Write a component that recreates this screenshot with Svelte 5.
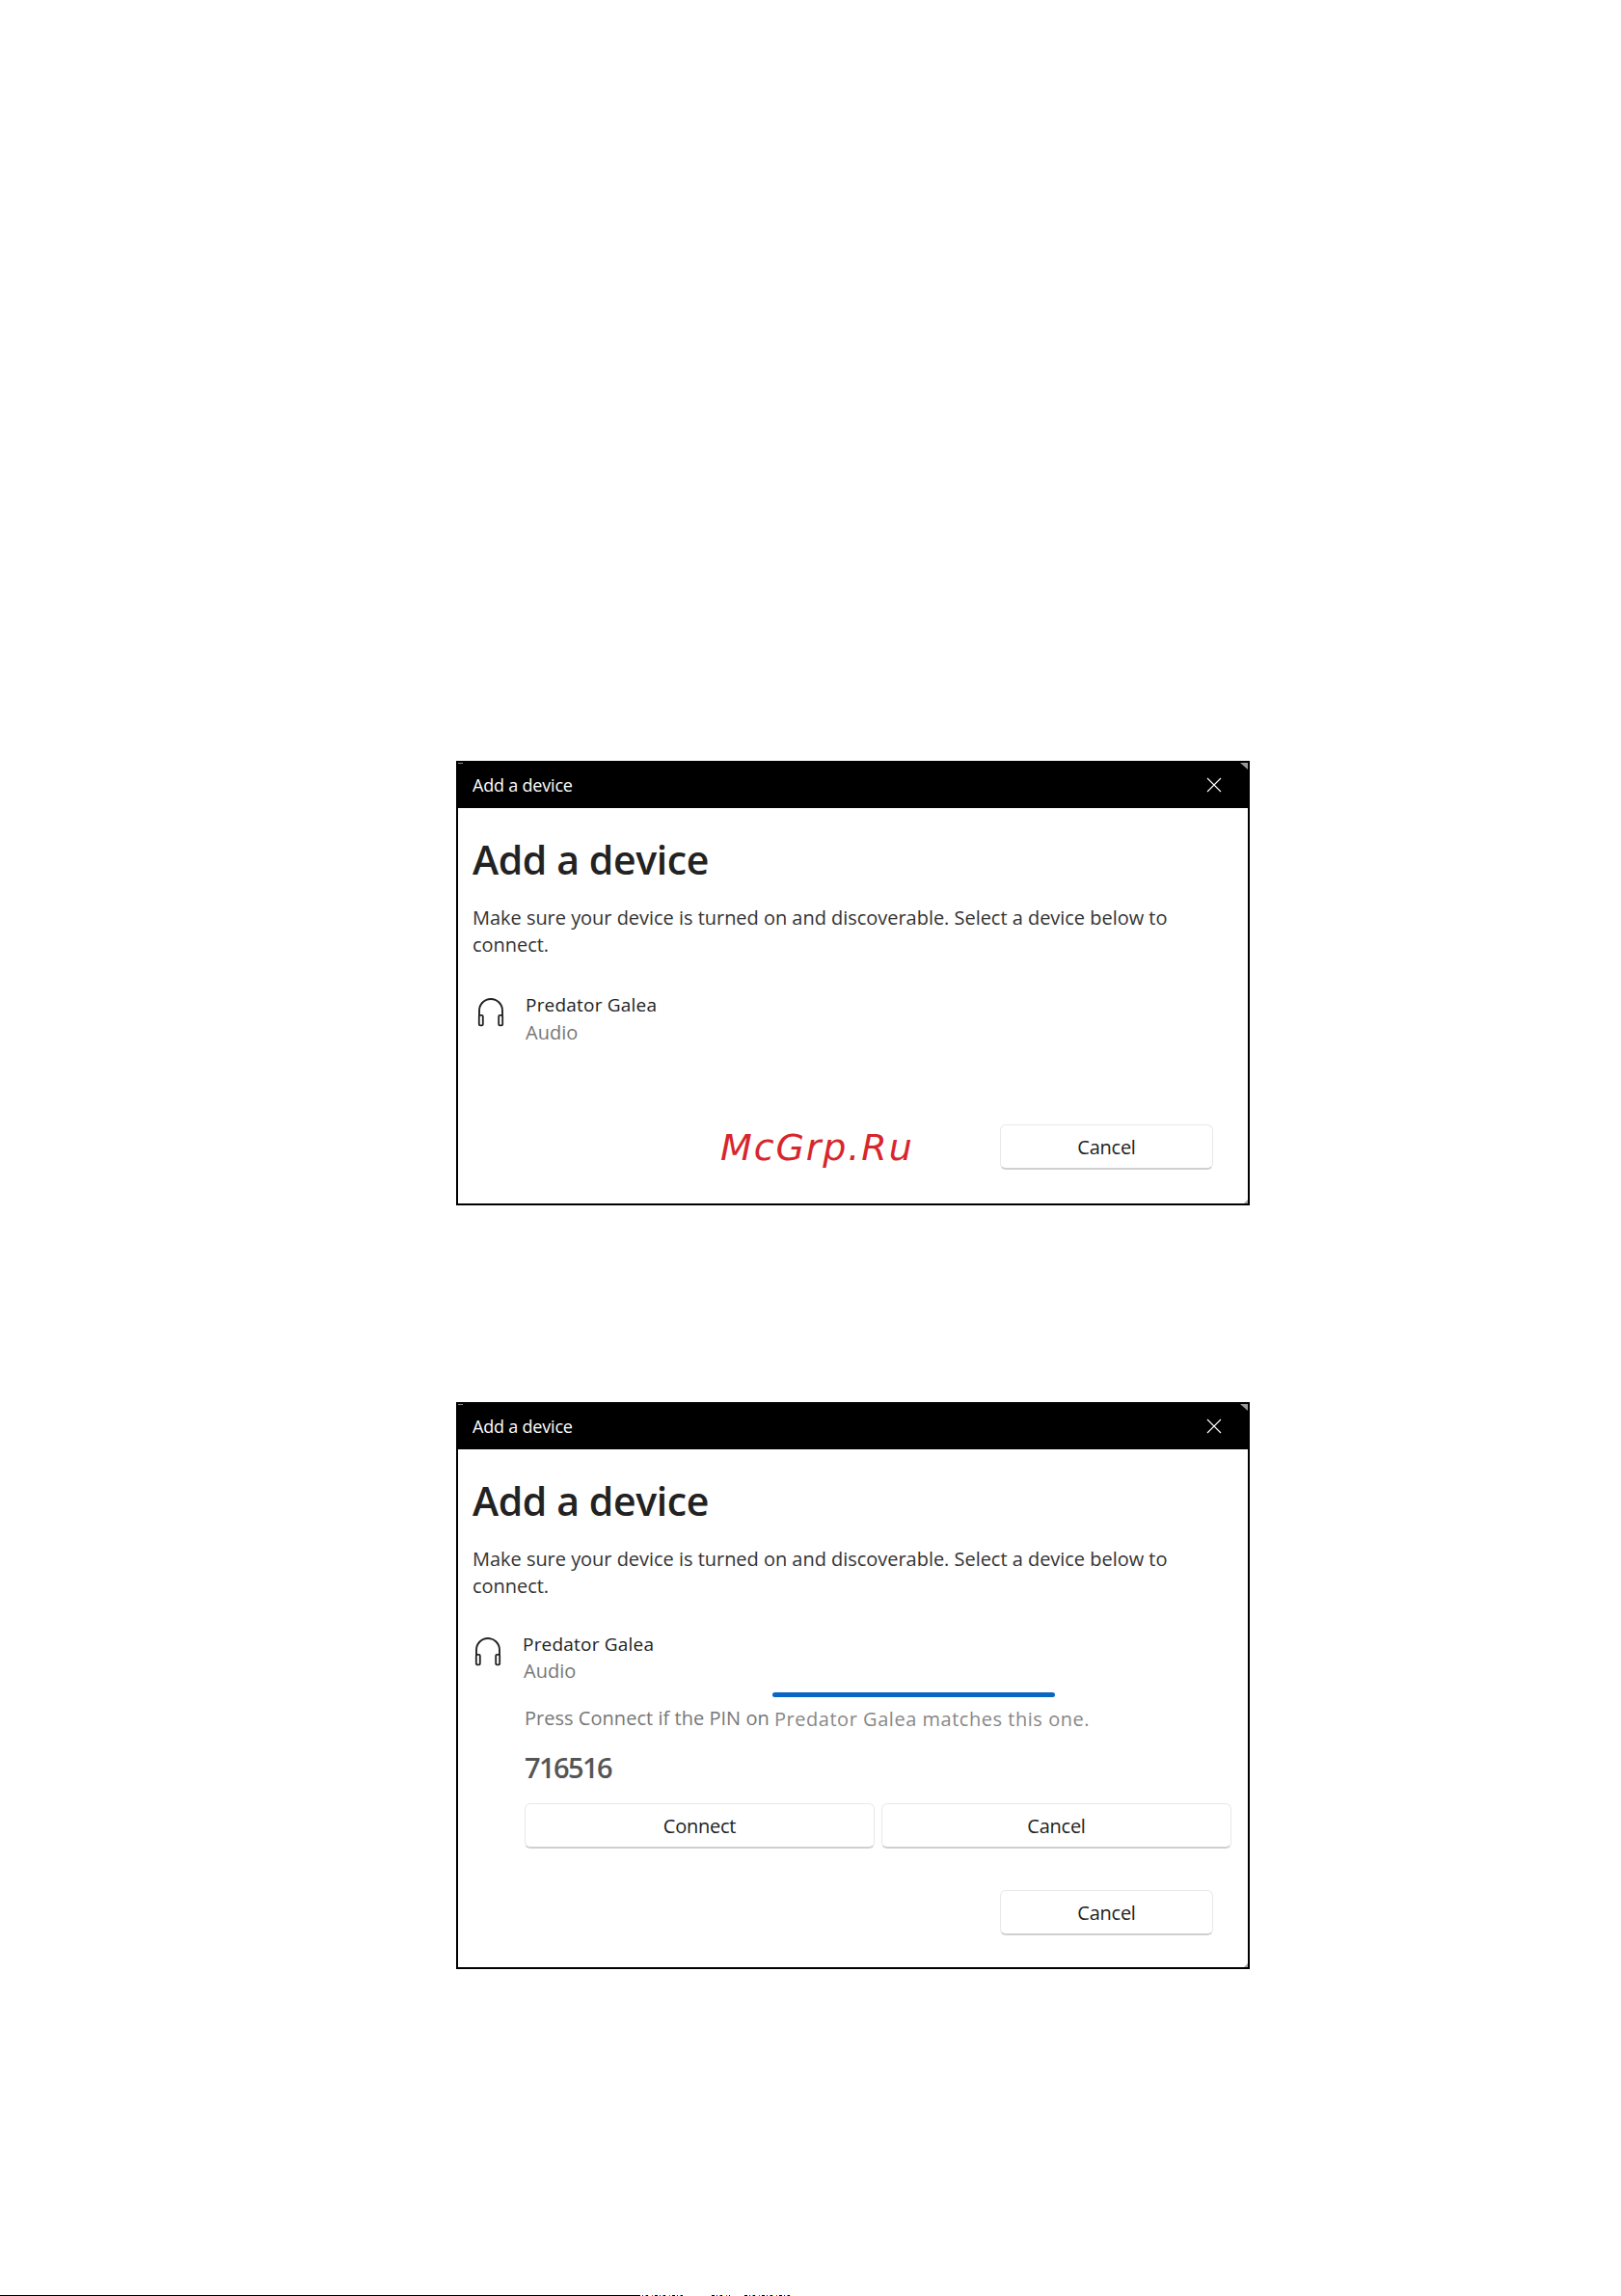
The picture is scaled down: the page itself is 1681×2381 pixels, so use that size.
<script>
  const dialogs = [
    { pairing: false },
    { pairing: true }
  ];
  const bits = [
    { left: 661, width: 47 },
    { left: 738, width: 19 },
    { left: 772, width: 48 }
  ];
</script>

<div class="page">
  {#each dialogs as d, i}
    <section class="dialog" class:second={d.pairing}>
      <header class="bar">
        <span>Add a device</span>
        <svg class="close" width="16" height="16" viewBox="0 0 16 16" aria-hidden="true"><path d="M1 1l14 14M15 1L1 15" stroke="#fff" stroke-width="1.1" fill="none"/></svg>
      </header>
      <i class="nick tl"></i>
      <i class="nick tr"></i>
      <i class="nick br"></i>
      <div class="body">
        <h1>Add a device</h1>
        <p class="intro">Make sure your device is turned on and discoverable. Select a device below to connect.</p>
        <div class="device">
          <svg class="phones" width="30" height="32" viewBox="0 0 30 32" aria-hidden="true">
            <path d="M3 22V14a12 12 0 0 1 24 0v8" fill="none" stroke="#222" stroke-width="1.9"/>
            <rect x="2.8" y="18.8" width="4" height="10.6" rx="1.2" fill="#fff" stroke="#222" stroke-width="1.8"/>
            <rect x="23.2" y="18.8" width="4" height="10.6" rx="1.2" fill="#fff" stroke="#222" stroke-width="1.8"/>
          </svg>
          <div class="names">
            <div class="name">Predator Galea</div>
            <div class="kind">Audio</div>
          </div>
        </div>
        {#if d.pairing}
          <div class="pairing">
            <div class="progress"></div>
            <p class="pin-text">Press Connect if the PIN on <span class="shift">Predator Galea matches this one.</span></p>
            <div class="pin">716516</div>
            <div class="pair-actions">
              <button>Connect</button>
              <button>Cancel</button>
            </div>
          </div>
        {/if}
        <div class="foot">
          {#if i === 0}<span class="mark">McGrp.Ru</span>{/if}
          <button class="cancel">Cancel</button>
        </div>
      </div>
    </section>
  {/each}
  {#each bits as b}
    <div class="bits" style="left:{b.left}px;width:{b.width}px"></div>
  {/each}
  <div class="scanline"></div>
</div>

<style>
  :global(body) { margin: 0; background: #fff; }
  .page {
    position: relative;
    box-sizing: border-box;
    height: 2381px;
    padding: 789px 0 0 473px;
    overflow: hidden;
    font-family: "Open Sans", "Noto Sans", sans-serif;
  }
  .dialog {
    position: relative;
    box-sizing: border-box;
    width: 823px;
    height: 461px;
    border: 2px solid #000;
    display: flex;
    flex-direction: column;
    background: #fff;
  }
  .second { height: 588px; margin-top: 204px; }
  .bar {
    flex: none;
    height: 49px;
    margin: -2px -2px 0;
    padding: 0 29px 0 17px;
    background: #000;
    color: #fff;
    font-size: 18px;
    letter-spacing: -0.2px;
    display: flex;
    align-items: center;
    justify-content: space-between;
  }
  .nick { position: absolute; display: block; }
  .nick.tl { left: 0; top: 0; width: 5px; height: 1px; background: #888; }
  .nick.tr { right: 0; top: 0; width: 8px; height: 7px; background: #999; clip-path: polygon(0 0, 100% 0, 100% 100%); }
  .nick.br { right: 0; bottom: 0; width: 4px; height: 4px; background: #aaa; clip-path: polygon(100% 0, 100% 100%, 0 100%); }
  .body { flex: 1; display: flex; flex-direction: column; padding: 0 16px; position: relative; }
  h1 {
    margin: 27px 0 0 -1px;
    font-size: 41px;
    line-height: 52px;
    font-weight: 600;
    color: #222;
    letter-spacing: -0.4px;
  }
  .intro {
    margin: 21px 0 0 -1px;
    width: 780px;
    font-size: 20px;
    line-height: 28px;
    color: #333;
    letter-spacing: -0.03px;
  }
  .device { display: flex; margin-top: 34px; align-items: flex-start; }
  .phones { margin: 6px 0 0 3px; flex: none; }
  .names { margin-left: 21px; }
  .second .device { margin-top: 32px; }
  .second .phones { margin-left: 0; }
  .second .kind { margin: 0 0 0 1px; }
  .name { font-size: 19px; line-height: 28px; color: #222; letter-spacing: 0.2px; }
  .kind { margin-top: 1px; font-size: 20px; line-height: 28px; color: #777; }
  .pairing { margin-left: 53px; position: relative; }
  .progress {
    position: absolute;
    top: 8px;
    left: 257px;
    width: 293px;
    height: 5px;
    border-radius: 3px;
    background: #0a66c2;
  }
  .pin-text { margin: 21px 0 0; font-size: 20px; line-height: 28px; color: #777; letter-spacing: 0.03px; white-space: nowrap; }
  .shift { position: relative; top: 1px; color: #888; letter-spacing: 0.53px; }
  .pin { margin-top: 17px; font-size: 29px; line-height: 40px; font-weight: 600; color: #555; letter-spacing: -1.6px; }
  .pair-actions { display: grid; grid-template-columns: 363px 363px; gap: 7px; margin-top: 17px; }
  button {
    box-sizing: border-box;
    height: 47px;
    border: 1px solid #e8e8e8;
    border-bottom: 2px solid #d0d0d0;
    border-radius: 6px;
    background: #fff;
    color: #222;
    font: 20px "Open Sans", "Noto Sans", sans-serif;
    letter-spacing: -0.25px;
    padding: 0;
  }
  .foot { margin-top: auto; padding-bottom: 35px; display: flex; justify-content: flex-end; padding-right: 20px; position: relative; }
  .second .foot { padding-bottom: 33px; }
  .cancel { width: 221px; }
  .mark {
    position: absolute;
    left: 256px;
    top: 1px;
    font: oblique 38px/46px "DejaVu Sans", sans-serif;
    letter-spacing: 1.9px;
    color: #d7262c;
  }
  .scanline { position: absolute; left: 0; bottom: 0; height: 1px; width: 661px; background: #000; }
  .bits {
    position: absolute;
    bottom: 0;
    height: 1px;
    background: repeating-linear-gradient(90deg, #000 0 3px, #fff 3px 5px, #00f 5px 6px, #fff 6px 8px, #0cc 8px 9px, #000 9px 11px, #ff0 11px 12px, #fff 12px 15px, #f00 15px 16px, #fff 16px 18px);
  }
</style>
